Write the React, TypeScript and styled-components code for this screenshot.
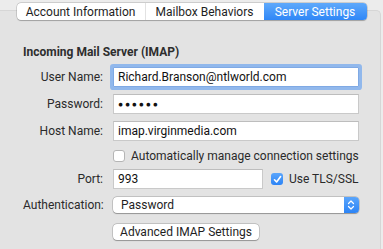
import React from 'react';
import styled, { createGlobalStyle } from 'styled-components';

const GlobalStyle = createGlobalStyle`
  html, body {
    margin: 0;
    padding: 0;
    background: #ececec;
    font-family: Roboto, "Noto Sans", sans-serif;
    -webkit-font-smoothing: antialiased;
  }
`;

const Window = styled.div`
  width: 383px;
  height: 249px;
  overflow: hidden;
  display: flex;
  flex-direction: column;
  align-items: center;
  padding-top: 3px;
  box-sizing: border-box;
  white-space: nowrap;
`;

const TabBar = styled.div`
  position: relative;
  z-index: 1;
  display: flex;
  height: 17px;
  background: #fff;
  border-radius: 4px;
  box-shadow: 0 0 0 0.5px rgba(0, 0, 0, 0.22), 0 0.5px 1px rgba(0, 0, 0, 0.2);
  overflow: hidden;
`;

const Tab = styled.div<{ $active?: boolean; $w: number }>`
  width: ${p => p.$w}px;
  display: flex;
  align-items: center;
  justify-content: center;
  font-size: 12px;
  color: ${p => (p.$active ? '#fff' : '#1e1e1e')};
  background: ${p => (p.$active ? 'linear-gradient(#5fa9fb, #2f87f7)' : 'transparent')};
  border-left: ${p => (p.$active ? 'none' : '1px solid #e2e2e2')};
  &:first-child {
    border-left: none;
  }
`;

const Panel = styled.div`
  align-self: stretch;
  margin: -10px 2px 0 0;
  flex: 1;
  background: #e3e3e3;
  border: 1px solid #d6d6d6;
  border-left: none;
  border-bottom: none;
  border-radius: 0 5px 0 0;
  padding: 34px 24px 0 23px;
`;

const Heading = styled.div`
  font-size: 12px;
  font-weight: 700;
  color: #2e2e2e;
  line-height: 15px;
  height: 19px;
`;

const Form = styled.div`
  display: grid;
  grid-template-columns: 80px 1fr;
  grid-template-rows: 26px 28px 26px 24px 22px 30px 24px;
  column-gap: 10px;
  align-items: center;
`;

const Label = styled.div`
  text-align: right;
  font-size: 12px;
  color: #2a2a2a;
`;

const Field = styled.div<{ $focus?: boolean; $w?: number }>`
  height: 20px;
  box-sizing: border-box;
  width: ${p => (p.$w ? `${p.$w}px` : '100%')};
  background: #fff;
  border: 1px solid #c9c9c9;
  border-top-color: #bdbdbd;
  padding-left: 4px;
  display: flex;
  align-items: center;
  font-size: 12px;
  color: #111;
  ${p => p.$focus && 'box-shadow: 0 0 0 3px #91b8ec; border-color: #7fa9e4; border-radius: 1px;'}
`;

const Dots = styled.span`
  font-size: 8.5px;
  letter-spacing: 1.8px;
`;

const CheckRow = styled.div`
  display: flex;
  align-items: center;
  gap: 6px;
  font-size: 12px;
  color: #2a2a2a;
`;

const Box = styled.span<{ $on?: boolean }>`
  width: 12px;
  height: 12px;
  box-sizing: border-box;
  border-radius: 3px;
  background: ${p => (p.$on ? 'linear-gradient(#5aa5fb, #2c84f6)' : '#fff')};
  border: ${p => (p.$on ? 'none' : '1px solid #b5b5b5')};
  display: flex;
  align-items: center;
  justify-content: center;
`;

const PortRow = styled.div`
  display: flex;
  align-items: center;
  gap: 8px;
`;

const Select = styled.div`
  height: 16px;
  display: flex;
  align-items: center;
  background: #fff;
  border-radius: 4px;
  box-shadow: 0 0 0 0.5px rgba(0, 0, 0, 0.25), 0 0.5px 1px rgba(0, 0, 0, 0.25);
  font-size: 12px;
  color: #1e1e1e;
  overflow: hidden;
`;

const SelectText = styled.span`
  flex: 1;
  padding-left: 8px;
`;

const Stepper = styled.span`
  width: 15px;
  height: 100%;
  background: linear-gradient(#5aa5fb, #2c84f6);
  display: flex;
  align-items: center;
  justify-content: center;
`;

const Button = styled.div`
  height: 16px;
  width: 146px;
  display: flex;
  align-items: center;
  justify-content: center;
  background: #fff;
  border-radius: 4px;
  box-shadow: 0 0 0 0.5px rgba(0, 0, 0, 0.25), 0 0.5px 1px rgba(0, 0, 0, 0.25);
  font-size: 12px;
  color: #1e1e1e;
`;

const Check = () => (
  <svg width="9" height="9" viewBox="0 0 9 9">
    <path d="M1.5 4.8 L3.6 7 L7.6 1.6" fill="none" stroke="#fff" strokeWidth="1.6" strokeLinecap="round" strokeLinejoin="round" />
  </svg>
);

const Arrows = () => (
  <svg width="8" height="12" viewBox="0 0 8 12">
    <path d="M1.5 4.5 L4 2 L6.5 4.5 M1.5 7.5 L4 10 L6.5 7.5" fill="none" stroke="#fff" strokeWidth="1.2" strokeLinecap="round" strokeLinejoin="round" />
  </svg>
);

export default function App() {
  return (
    <>
      <GlobalStyle />
      <Window>
        <TabBar>
          <Tab $w={128}>Account Information</Tab>
          <Tab $w={118}>Mailbox Behaviors</Tab>
          <Tab $w={103} $active>Server Settings</Tab>
        </TabBar>
        <Panel>
          <Heading>Incoming Mail Server (IMAP)</Heading>
          <Form>
            <Label>User Name:</Label>
            <Field $focus>Richard.Branson@ntlworld.com</Field>

            <Label>Password:</Label>
            <Field><Dots>●●●●●●</Dots></Field>

            <Label>Host Name:</Label>
            <Field>imap.virginmedia.com</Field>

            <span />
            <CheckRow><Box />Automatically manage connection settings</CheckRow>

            <Label>Port:</Label>
            <PortRow>
              <Field $w={150}>993</Field>
              <CheckRow><Box $on><Check /></Box>Use TLS/SSL</CheckRow>
            </PortRow>

            <Label>Authentication:</Label>
            <Select>
              <SelectText>Password</SelectText>
              <Stepper><Arrows /></Stepper>
            </Select>

            <span />
            <div><Button>Advanced IMAP Settings</Button></div>
          </Form>
        </Panel>
      </Window>
    </>
  );
}
